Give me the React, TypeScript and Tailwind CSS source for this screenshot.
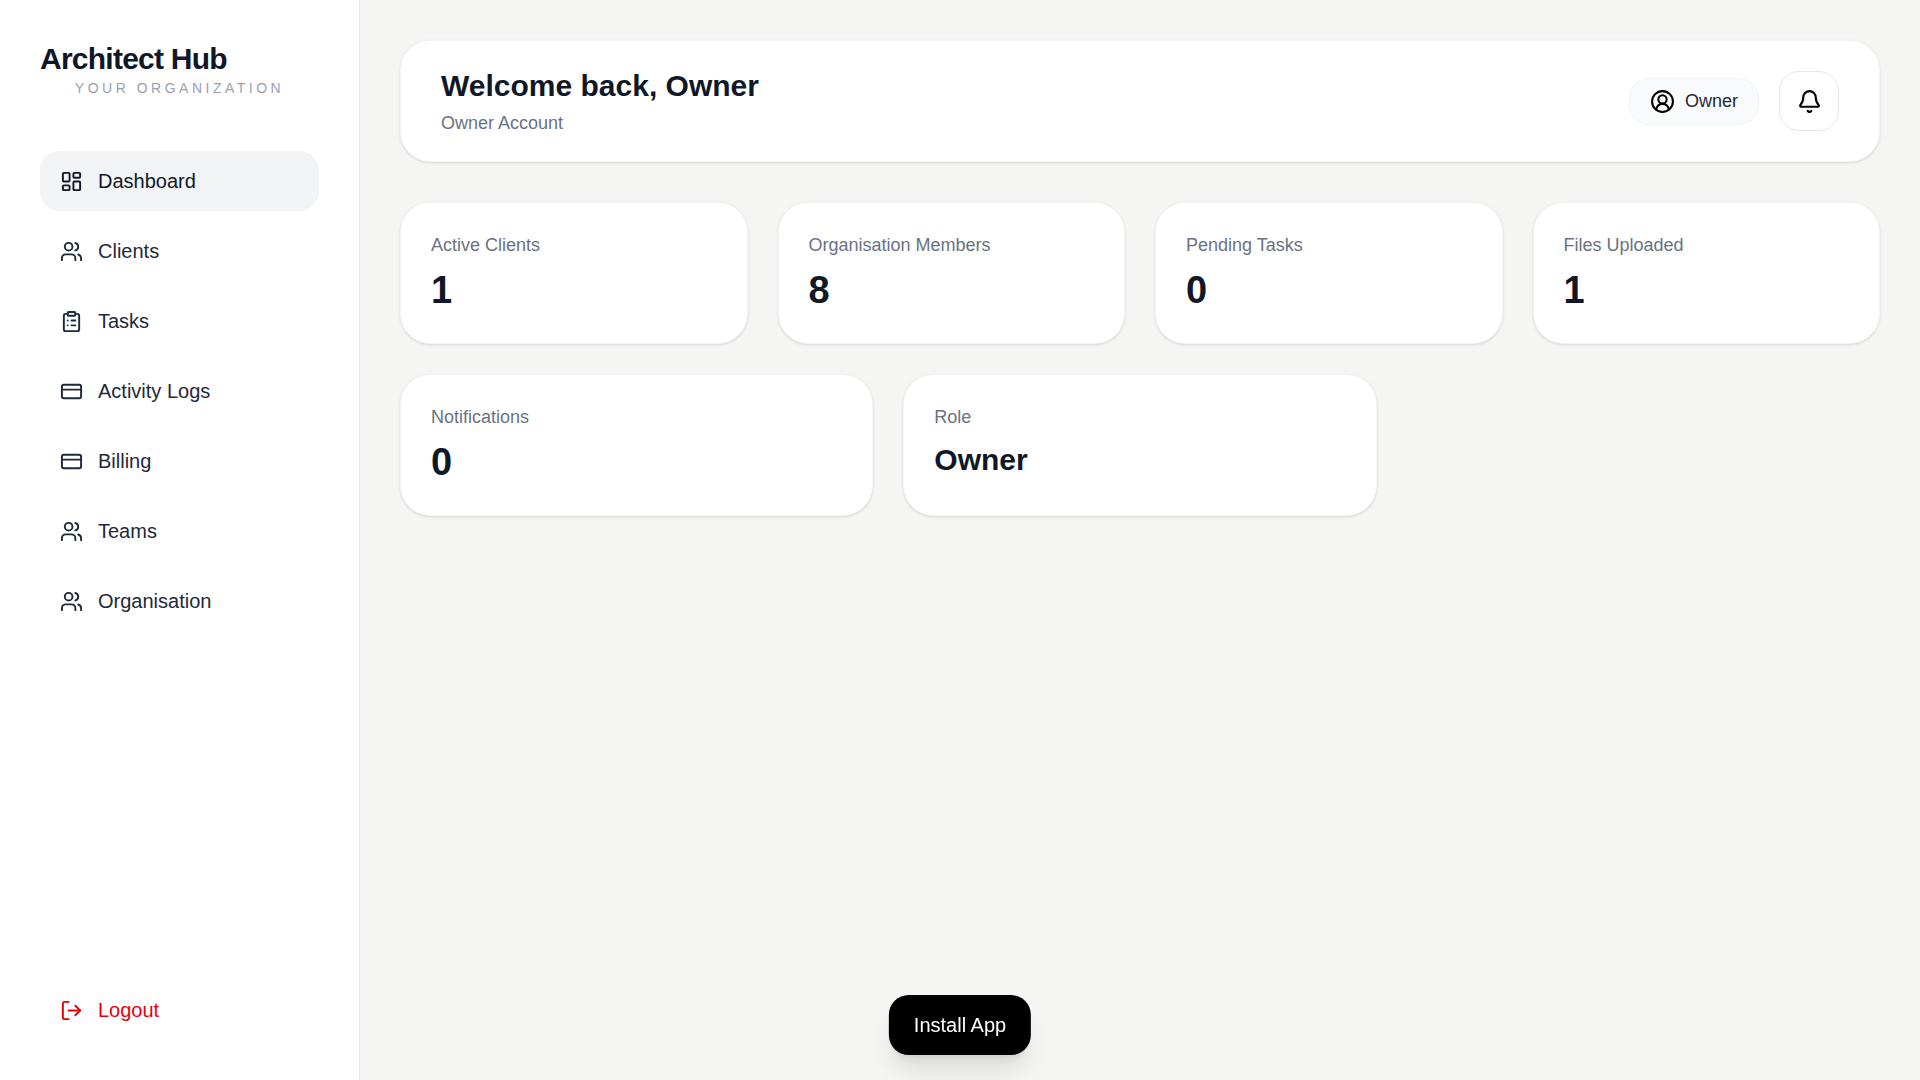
import { useState } from 'react'
import {
  Bell, CircleUserRound, ClipboardList, CreditCard, LayoutDashboard, LogOut, Users,
} from 'lucide-react'
import type { LucideIcon } from 'lucide-react'

interface NavItem {
  id: string
  label: string
  icon: LucideIcon
}

const navItems: NavItem[] = [
  { id: 'dashboard', label: 'Dashboard', icon: LayoutDashboard },
  { id: 'clients', label: 'Clients', icon: Users },
  { id: 'tasks', label: 'Tasks', icon: ClipboardList },
  { id: 'activity', label: 'Activity Logs', icon: CreditCard },
  { id: 'billing', label: 'Billing', icon: CreditCard },
  { id: 'teams', label: 'Teams', icon: Users },
  { id: 'organisation', label: 'Organisation', icon: Users },
]

const stats = [
  { label: 'Active Clients', value: 1 },
  { label: 'Organisation Members', value: 8 },
  { label: 'Pending Tasks', value: 0 },
  { label: 'Files Uploaded', value: 1 },
]

function Sidebar() {
  const [active, setActive] = useState('dashboard')

  return (
    <aside className="flex w-[360px] shrink-0 flex-col justify-between border-r border-gray-200 bg-white p-10">
      <div>
        <div className="mb-[52px]">
          <h1 className="text-[30px] leading-[38px] font-bold tracking-tight text-gray-900">Architect Hub</h1>
          <p className="text-center text-sm leading-[21px] tracking-[0.25em] text-gray-400 uppercase">
            Your Organization
          </p>
        </div>

        <nav className="flex flex-col gap-2.5">
          {navItems.map(({ id, label, icon: Icon }) => (
            <a
              key={id}
              href={`#${id}`}
              onClick={() => setActive(id)}
              className={`flex items-center gap-[15px] rounded-[20px] px-5 py-[15px] text-xl leading-[30px] ${
                active === id ? 'bg-gray-100 text-gray-900' : 'text-gray-800 hover:bg-gray-50'
              }`}
            >
              <Icon size={23} />
              {label}
            </a>
          ))}
        </nav>
      </div>

      <button
        type="button"
        className="flex items-center gap-[15px] rounded-[20px] px-5 py-[15px] text-xl leading-[30px] text-red-600 hover:bg-red-50"
      >
        <LogOut size={23} />
        Logout
      </button>
    </aside>
  )
}

function Header() {
  return (
    <header className="flex items-center justify-between rounded-[30px] border border-gray-100 bg-white px-10 py-6 shadow-sm">
      <div>
        <h2 className="text-[30px] leading-[42px] font-bold text-gray-900">Welcome back, Owner</h2>
        <p className="mt-0.5 text-lg leading-7 text-gray-500">Owner Account</p>
      </div>

      <div className="flex items-center gap-5">
        <div className="flex items-center gap-2.5 rounded-[20px] border border-gray-100 bg-gray-50 px-5 py-2.5">
          <CircleUserRound size={25} />
          <span className="text-lg leading-[25px] text-gray-800">Owner</span>
        </div>
        <button
          type="button"
          aria-label="Notifications"
          className="flex size-[60px] items-center justify-center rounded-[20px] border border-gray-200 bg-white hover:bg-gray-50"
        >
          <Bell size={25} />
        </button>
      </div>
    </header>
  )
}

function StatCard({ label, value }: { label: string; value: string | number }) {
  const size = typeof value === 'number' ? 'text-[38px] leading-[45px]' : 'text-[30px] leading-10'

  return (
    <div className="rounded-[30px] border border-gray-100 bg-white p-[30px] shadow-sm">
      <p className="text-lg leading-[25px] text-gray-500">{label}</p>
      <p className={`mt-2.5 font-bold text-gray-900 ${size}`}>{value}</p>
    </div>
  )
}

export default function App() {
  return (
    <div className="flex min-h-screen bg-[#f5f5f3] font-['Liberation_Sans',Arial,sans-serif] text-black">
      <Sidebar />

      <main className="min-w-0 flex-1 p-10">
        <Header />

        <section className="mt-10 grid grid-cols-4 gap-[30px]">
          {stats.map(s => (
            <StatCard key={s.label} label={s.label} value={s.value} />
          ))}
        </section>

        <section className="mt-[30px] grid grid-cols-3 gap-[30px]">
          <StatCard label="Notifications" value={0} />
          <StatCard label="Role" value="Owner" />
        </section>
      </main>

      {/* Install prompt, floats over the page */}
      <button
        type="button"
        className="fixed bottom-[25px] left-1/2 -translate-x-1/2 rounded-[20px] bg-black px-[25px] py-[15px] text-xl leading-[30px] text-white shadow-xl"
      >
        Install App
      </button>
    </div>
  )
}
